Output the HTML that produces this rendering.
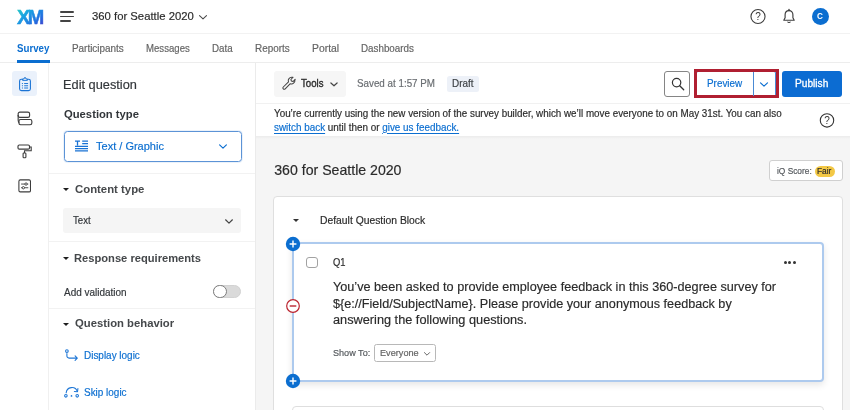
<!DOCTYPE html>
<html><head><meta charset="utf-8">
<style>
*{box-sizing:border-box;margin:0;padding:0}
html,body{width:850px;height:410px;overflow:hidden;background:#fff;font-family:"Liberation Sans",sans-serif;color:#32363a}
.abs{position:absolute}
#root{will-change:transform;position:relative;width:850px;height:410px;overflow:hidden;background:#fff}
.tri{width:0;height:0;border-left:3.4px solid transparent;border-right:3.4px solid transparent;border-top:3.8px solid #1e1e1e}
.t{position:absolute;white-space:nowrap;line-height:1;transform-origin:0 0}
</style></head><body>
<div id="root">
<!-- top header -->
<div class="abs" style="left:0;top:33px;width:850px;height:1px;background:#f2f2f2"></div>
<svg class="abs" style="left:15px;top:6px" width="32" height="22" viewBox="0 0 32 22">
<defs><linearGradient id="g" x1="0" y1="0" x2="1" y2="1"><stop offset="0" stop-color="#2fd4bc"/><stop offset="0.35" stop-color="#1aa3e2"/><stop offset="0.7" stop-color="#226fe0"/><stop offset="1" stop-color="#4a35c6"/></linearGradient></defs>
<text x="1.9" y="17.9" font-family="Liberation Sans,sans-serif" font-weight="bold" font-size="19.8" letter-spacing="-2.3" fill="url(#g)" stroke="url(#g)" stroke-width="0.5">XM</text>
</svg>
<div class="abs" style="left:60px;top:11.25px;width:14px;height:1.5px;background:#444;border-radius:1px"></div>
<div class="abs" style="left:60px;top:15.75px;width:14px;height:1.5px;background:#444;border-radius:1px"></div>
<div class="abs" style="left:60px;top:20.25px;width:11px;height:1.5px;background:#444;border-radius:1px"></div>
<svg class="abs" style="left:197.8px;top:13.6px" width="10" height="7" viewBox="0 0 10 7"><path d="M1.5 1.6 L5 4.9 L8.5 1.6" fill="none" stroke="#4a4a4a" stroke-width="1.05" stroke-linecap="round" stroke-linejoin="round"/></svg>
<!-- header right icons -->
<svg class="abs" style="left:749px;top:8px" width="18" height="18" viewBox="0 0 18 18"><circle cx="9" cy="8.5" r="7.05" fill="none" stroke="#3c3c3c" stroke-width="1.1"/><text x="9" y="12" text-anchor="middle" font-family="Liberation Sans,sans-serif" font-size="10" fill="#333">?</text></svg>
<svg class="abs" style="left:782px;top:8px" width="15" height="17" viewBox="0 0 15 17"><path d="M7 2.6 C4.5 2.6 3.1 4.5 3.1 6.8 V9.8 L1.8 12.2 H12.2 L10.9 9.8 V6.8 C10.9 4.5 9.5 2.6 7 2.6 Z" fill="none" stroke="#3c3c3c" stroke-width="1.15" stroke-linejoin="round"/><path d="M7 1.4v1.2" stroke="#3c3c3c" stroke-width="1.3" stroke-linecap="round"/><path d="M5.6 13.6 a1.5 1.5 0 0 0 2.8 0" fill="none" stroke="#3c3c3c" stroke-width="1.1"/></svg>
<div class="abs" style="left:811.5px;top:8px;width:17px;height:17px;border-radius:50%;background:#0b6ed0"></div>

<!-- nav tabs -->
<div class="abs" style="left:0;top:62px;width:850px;height:1px;background:#ededed"></div>
<div class="abs" style="left:17.2px;top:60px;width:32.6px;height:2.5px;background:#0b6ed0"></div>

<!-- left rail -->
<div class="abs" style="left:48px;top:63px;width:1px;height:347px;background:#f0f0f0"></div>
<div class="abs" style="left:12px;top:71px;width:25px;height:25px;border-radius:3px;background:#eaf1fb"></div>
<svg class="abs" style="left:17.5px;top:75.6px" width="14" height="16" viewBox="0 0 15 17"><rect x="1.7" y="3.4" width="11.6" height="12.2" rx="2" fill="none" stroke="#1a73d4" stroke-width="1.15"/><path d="M4.9 4.6V3.2h1.3L7.5 1.2 8.8 3.2h1.3v1.4z" fill="#eaf1fb" stroke="#1a73d4" stroke-width="1.05" stroke-linejoin="round"/><path d="M4.2 8h1.1M6.6 8h4.2M4.2 10.4h1.1M6.6 10.4h4.2M4.2 12.8h1.1M6.6 12.8h4.2" stroke="#1a73d4" stroke-width="1.05"/></svg>
<svg class="abs" style="left:16.7px;top:110.7px" width="16" height="15" viewBox="0 0 17 16"><rect x="1.2" y="1.2" width="12.2" height="5.6" rx="1.8" fill="none" stroke="#3c3c3c" stroke-width="1.2"/><rect x="2" y="9" width="13.8" height="5.6" rx="1.8" fill="none" stroke="#3c3c3c" stroke-width="1.2"/><path d="M1.2 4.2v5.6q0 2 1.2 2.6" fill="none" stroke="#3c3c3c" stroke-width="1.2"/></svg>
<svg class="abs" style="left:17.4px;top:144.3px" width="16" height="15" viewBox="0 0 16 17" preserveAspectRatio="none"><rect x="1" y="1.2" width="11.5" height="4.6" rx="1.3" fill="none" stroke="#3c3c3c" stroke-width="1.15"/><path d="M12.5 3.5h1.7v4.2H7.5v2.5" fill="none" stroke="#3c3c3c" stroke-width="1.1"/><rect x="6.1" y="10.2" width="2.8" height="5.4" rx="0.8" fill="none" stroke="#3c3c3c" stroke-width="1.1"/></svg>
<svg class="abs" style="left:17.7px;top:179px" width="13.4" height="13.8" viewBox="0 0 15 15" preserveAspectRatio="none"><rect x="1" y="1" width="13" height="13" rx="1.6" fill="none" stroke="#3c3c3c" stroke-width="1.2"/><path d="M3.5 5.5h8M3.5 9.5h8" stroke="#3c3c3c" stroke-width="1"/><circle cx="9" cy="5.5" r="1.3" fill="#fff" stroke="#3c3c3c" stroke-width="1"/><circle cx="6" cy="9.5" r="1.3" fill="#fff" stroke="#3c3c3c" stroke-width="1"/></svg>

<!-- left panel -->
<div class="abs" style="left:255px;top:63px;width:1px;height:347px;background:#ebebeb"></div>
<div class="abs" style="left:63.5px;top:130.5px;width:178px;height:31px;border:1px solid #5c93d6;border-radius:3.5px;background:#fff;box-shadow:0 0 0 1px rgba(92,147,214,.12)"></div>
<svg class="abs" style="left:73.5px;top:140px" width="15" height="12" viewBox="0 0 15 12"><path d="M1 1.2h5M3.5 1.2v4.3M8.2 1.2h5.8M8.2 3.6h5.8M1 6.4h13M1 8.6h13M1 10.8h13" stroke="#1a73d4" stroke-width="1.3" fill="none"/></svg>
<svg class="abs" style="left:218.2px;top:142.6px" width="10" height="7" viewBox="0 0 10 7"><path d="M1.6 1.8 L5 5.1 L8.4 1.8" fill="none" stroke="#0b6ed0" stroke-width="1.15" stroke-linecap="round" stroke-linejoin="round"/></svg>
<div class="abs" style="left:49px;top:173px;width:206px;height:1px;background:#f2f2f2"></div>
<div class="abs tri" style="left:63.1px;top:188.2px"></div>
<div class="abs" style="left:63.2px;top:208px;width:178.3px;height:25.2px;border-radius:3px;background:#f5f5f5"></div>
<svg class="abs" style="left:224.2px;top:217.6px" width="10" height="7" viewBox="0 0 10 7"><path d="M1.6 1.8 L5 5.1 L8.4 1.8" fill="none" stroke="#444" stroke-width="1.2" stroke-linecap="round" stroke-linejoin="round"/></svg>
<div class="abs" style="left:49px;top:241px;width:206px;height:1px;background:#f2f2f2"></div>
<div class="abs tri" style="left:63.1px;top:256.8px"></div>
<div class="abs" style="left:212.5px;top:285.3px;width:28.5px;height:13.2px;border-radius:7px;background:#dadada;border:1px solid #d2d2d2"></div>
<div class="abs" style="left:212.5px;top:285.3px;width:14.5px;height:13.2px;border-radius:7px;background:#fff;border:1px solid #7d7d7d"></div>
<div class="abs" style="left:49px;top:308px;width:206px;height:1px;background:#f2f2f2"></div>
<div class="abs tri" style="left:63.1px;top:322.8px"></div>
<svg class="abs" style="left:63.5px;top:348px" width="15" height="14" viewBox="0 0 15 14"><circle cx="2.9" cy="3.1" r="1.35" fill="none" stroke="#1f77d6" stroke-width="1.05"/><path d="M2.9 5.5V8a2.1 2.1 0 0 0 2.1 2.1H13.2M11.1 7.9l2.2 2.2-2.2 2.2" fill="none" stroke="#1f77d6" stroke-width="1.1" stroke-linecap="round" stroke-linejoin="round"/></svg>
<svg class="abs" style="left:63.5px;top:385.5px" width="16" height="14" viewBox="0 0 16 14"><path d="M2.2 6.8A5.7 5.7 0 0 1 13.3 5.5" fill="none" stroke="#1f77d6" stroke-width="1.1" stroke-linecap="round"/><path d="M13.9 2.5L13.5 5.8 10.4 5.5" fill="none" stroke="#1f77d6" stroke-width="1.1" stroke-linecap="round" stroke-linejoin="round"/><circle cx="1.9" cy="9.8" r="1.3" fill="none" stroke="#1f77d6" stroke-width="1.05"/><circle cx="7.5" cy="9.9" r="0.85" fill="#1f77d6"/><circle cx="13.2" cy="9.8" r="1.3" fill="none" stroke="#1f77d6" stroke-width="1.05"/></svg>

<!-- main area -->
<div class="abs" style="left:256px;top:135.5px;width:594px;height:275px;background:#f5f5f5"></div>
<div class="abs" style="left:256px;top:135.5px;width:594px;height:3px;background:linear-gradient(rgba(0,0,0,.04),rgba(0,0,0,0))"></div>
<div class="abs" style="left:256px;top:103px;width:594px;height:1px;background:#f1f1f1"></div>
<!-- toolbar -->
<div class="abs" style="left:273.5px;top:71px;width:72px;height:26px;border-radius:3px;background:#f6f6f6"></div>
<svg class="abs" style="left:280.6px;top:76.2px" width="16" height="16" viewBox="0 0 16 16"><path d="M13.9 4.1a3.4 3.4 0 0 1-4.6 3.6L4.2 12.9a1.3 1.3 0 0 1-1.9-1.9l5.2-5.1a3.4 3.4 0 0 1 3.6-4.6l1-.1-2.2 2.3.5 1.6 1.6.5 2.2-2.3z" fill="none" stroke="#444" stroke-width="1.05" stroke-linejoin="round"/></svg>
<svg class="abs" style="left:328.8px;top:81px" width="10" height="7" viewBox="0 0 10 7"><path d="M1.9 2 L5 4.8 L8.1 2" fill="none" stroke="#444" stroke-width="1.2" stroke-linecap="round" stroke-linejoin="round"/></svg>
<div class="abs" style="left:447px;top:75.8px;width:31.8px;height:16.2px;border-radius:2.5px;background:#edf1f8"></div>
<div class="abs" style="left:664px;top:71px;width:26px;height:25.5px;border:1px solid #858585;border-radius:3px;background:#fff"></div>
<svg class="abs" style="left:670.5px;top:77.3px" width="14" height="14" viewBox="0 0 14 14"><circle cx="5.6" cy="5.6" r="4.2" fill="none" stroke="#333" stroke-width="1.2"/><path d="M8.7 8.7l4 4" stroke="#333" stroke-width="1.3" stroke-linecap="round"/></svg>
<div class="abs" style="left:696px;top:71px;width:80px;height:25.5px;border:1px solid #4a8ad4;border-radius:2px;background:#fff"></div>
<div class="abs" style="left:694px;top:69px;width:85px;height:28.5px;border:3px solid #b01f31"></div>
<div class="abs" style="left:753px;top:71.5px;width:1px;height:24px;background:#4a8ad4"></div>
<svg class="abs" style="left:758.5px;top:80.8px" width="10" height="7" viewBox="0 0 10 7"><path d="M1.5 1.8 L5 5.1 L8.5 1.8" fill="none" stroke="#0b6ed0" stroke-width="1.15" stroke-linecap="round" stroke-linejoin="round"/></svg>
<div class="abs" style="left:781.5px;top:71px;width:60.5px;height:25.5px;border-radius:3px;background:#0c6cd2"></div>
<!-- banner -->
<svg class="abs" style="left:817.5px;top:112px" width="18" height="18" viewBox="0 0 18 18"><circle cx="9" cy="8.4" r="6.7" fill="none" stroke="#333" stroke-width="1.1"/><text x="9" y="11.8" text-anchor="middle" font-family="Liberation Sans,sans-serif" font-size="10" fill="#333">?</text></svg>
<!-- title -->
<div class="abs" style="left:769px;top:159.5px;width:73.5px;height:21px;border:1px solid #d0d0d0;border-radius:3px;background:#fff"></div>
<div class="abs" style="left:815px;top:165.5px;width:19.5px;height:11px;border-radius:5.5px;background:#f3c845"></div>
<!-- block -->
<div class="abs" style="left:273px;top:196px;width:570px;height:230px;background:#fff;border:1px solid #dfdfdf;border-radius:4px"></div>
<div class="abs" style="left:292px;top:406px;width:532px;height:20px;background:#fff;border:1px solid #dedede;border-radius:4px"></div>
<div class="abs tri" style="left:292.6px;top:218.9px;border-top-color:#333"></div>
<!-- question card -->
<div class="abs" style="left:292px;top:242px;width:532px;height:140px;background:#fff;border:2px solid #adcaee;border-radius:4px;box-shadow:0 3px 7px rgba(0,0,0,.10)"></div>
<svg class="abs" style="left:285.3px;top:236px" width="16" height="16" viewBox="0 0 16 16"><circle cx="8" cy="8" r="7.2" fill="#0b6ed0"/><path d="M4.6 8h6.8M8 4.6v6.8" stroke="#fff" stroke-width="1.4"/></svg>
<svg class="abs" style="left:285.2px;top:372.5px" width="16" height="16" viewBox="0 0 16 16"><circle cx="8" cy="8" r="7.2" fill="#0b6ed0"/><path d="M4.6 8h6.8M8 4.6v6.8" stroke="#fff" stroke-width="1.4"/></svg>
<svg class="abs" style="left:285.3px;top:297.5px" width="16" height="16" viewBox="0 0 16 16"><circle cx="8" cy="8" r="6.3" fill="#fff" stroke="#bb2530" stroke-width="1.2"/><path d="M4.7 8h6.6" stroke="#bb2530" stroke-width="1.4"/></svg>
<div class="abs" style="left:305.8px;top:256.7px;width:11.8px;height:11.6px;border:1px solid #a2a2a2;border-radius:3px;background:#fff"></div>
<div class="abs" style="left:783.7px;top:260.7px;width:3.1px;height:3.1px;border-radius:50%;background:#333"></div>
<div class="abs" style="left:788.1px;top:260.7px;width:3.1px;height:3.1px;border-radius:50%;background:#333"></div>
<div class="abs" style="left:792.5px;top:260.7px;width:3.1px;height:3.1px;border-radius:50%;background:#333"></div>
<div class="abs" style="left:374px;top:344.3px;width:61.5px;height:17.7px;border:1px solid #b8b8b8;border-radius:2.5px;background:#fff"></div>
<svg class="abs" style="left:422.5px;top:350.5px" width="8" height="6" viewBox="0 0 8 6"><path d="M1.4 1.6 L4 4.2 L6.6 1.6" fill="none" stroke="#666" stroke-width="1" stroke-linecap="round" stroke-linejoin="round"/></svg>
<div class="t" style="left:91.51px;top:10.58px;font-size:11.44px;font-weight:normal;color:#2b2b2b;transform:scaleX(0.9882);-webkit-text-stroke:0.18px #2b2b2b;">360 for Seattle 2020</div>
<div class="t" style="left:17.27px;top:43.60px;font-size:10.4px;font-weight:bold;color:#0b6ed0;transform:scaleX(0.9343);">Survey</div>
<div class="t" style="left:72.04px;top:43.60px;font-size:10.4px;font-weight:normal;color:#646464;transform:scaleX(0.9531);-webkit-text-stroke:0.18px #646464;">Participants</div>
<div class="t" style="left:145.81px;top:43.60px;font-size:10.4px;font-weight:normal;color:#646464;transform:scaleX(0.9243);-webkit-text-stroke:0.18px #646464;">Messages</div>
<div class="t" style="left:212.29px;top:43.60px;font-size:10.4px;font-weight:normal;color:#646464;transform:scaleX(0.9412);-webkit-text-stroke:0.18px #646464;">Data</div>
<div class="t" style="left:255.49px;top:43.60px;font-size:10.4px;font-weight:normal;color:#646464;transform:scaleX(0.9532);-webkit-text-stroke:0.18px #646464;">Reports</div>
<div class="t" style="left:312.25px;top:43.60px;font-size:10.4px;font-weight:normal;color:#646464;transform:scaleX(0.9981);-webkit-text-stroke:0.18px #646464;">Portal</div>
<div class="t" style="left:360.89px;top:43.60px;font-size:10.4px;font-weight:normal;color:#646464;transform:scaleX(0.9436);-webkit-text-stroke:0.18px #646464;">Dashboards</div>
<div class="t" style="left:62.98px;top:79.06px;font-size:12.48px;font-weight:normal;color:#32363a;transform:scaleX(1.0249);-webkit-text-stroke:0.18px #32363a;">Edit question</div>
<div class="t" style="left:63.51px;top:108.58px;font-size:11.44px;font-weight:bold;color:#32363a;transform:scaleX(0.9834);">Question type</div>
<div class="t" style="left:95.77px;top:139.93px;font-size:11.75px;font-weight:normal;color:#0b6ed0;transform:scaleX(0.9375);-webkit-text-stroke:0.18px #0b6ed0;">Text / Graphic</div>
<div class="t" style="left:74.50px;top:183.58px;font-size:11.44px;font-weight:bold;color:#45484b;transform:scaleX(0.9928);">Content type</div>
<div class="t" style="left:72.96px;top:215.76px;font-size:10.09px;font-weight:normal;color:#32363a;transform:scaleX(0.9589);-webkit-text-stroke:0.18px #32363a;">Text</div>
<div class="t" style="left:74.27px;top:252.58px;font-size:11.44px;font-weight:bold;color:#45484b;transform:scaleX(0.9748);">Response requirements</div>
<div class="t" style="left:63.50px;top:287.60px;font-size:10.4px;font-weight:normal;color:#32363a;transform:scaleX(0.9575);-webkit-text-stroke:0.18px #32363a;">Add validation</div>
<div class="t" style="left:74.51px;top:317.58px;font-size:11.44px;font-weight:bold;color:#45484b;transform:scaleX(0.9875);">Question behavior</div>
<div class="t" style="left:83.68px;top:350.60px;font-size:10.4px;font-weight:normal;color:#0b6ed0;transform:scaleX(0.9572);-webkit-text-stroke:0.18px #0b6ed0;">Display logic</div>
<div class="t" style="left:83.92px;top:387.60px;font-size:10.4px;font-weight:normal;color:#0b6ed0;transform:scaleX(0.9577);-webkit-text-stroke:0.18px #0b6ed0;">Skip logic</div>
<div class="t" style="left:301.27px;top:78.60px;font-size:10.4px;font-weight:normal;color:#2b2b2b;transform:scaleX(0.9263);-webkit-text-stroke:0.35px #2b2b2b;">Tools</div>
<div class="t" style="left:356.78px;top:78.60px;font-size:10.4px;font-weight:normal;color:#696d71;transform:scaleX(0.9446);-webkit-text-stroke:0.18px #696d71;">Saved at 1:57 PM</div>
<div class="t" style="left:451.78px;top:78.60px;font-size:10.4px;font-weight:normal;color:#3d4145;transform:scaleX(0.9540);-webkit-text-stroke:0.18px #3d4145;">Draft</div>
<div class="t" style="left:706.79px;top:78.60px;font-size:10.4px;font-weight:normal;color:#0b6ed0;transform:scaleX(0.9517);-webkit-text-stroke:0.18px #0b6ed0;">Preview</div>
<div class="t" style="left:795.27px;top:78.60px;font-size:10.4px;font-weight:normal;color:#fff;transform:scaleX(0.9771);-webkit-text-stroke:0.3px #fff;">Publish</div>
<div class="t" style="left:273.76px;top:108.60px;font-size:10.4px;font-weight:normal;color:#2b2b2b;transform:scaleX(0.9468);-webkit-text-stroke:0.18px #2b2b2b;">You’re currently using the new version of the survey builder, which we’ll move everyone to on May 31st. You can also</div>
<div class="t" style="left:273.76px;top:122.60px;font-size:10.4px;font-weight:normal;color:#2b2b2b;transform:scaleX(0.9509);-webkit-text-stroke:0.18px #2b2b2b;"><span style="color:#0b6ed0;-webkit-text-stroke-color:#0b6ed0;text-decoration:underline;text-underline-offset:2px">switch back</span> until then or <span style="color:#0b6ed0;-webkit-text-stroke-color:#0b6ed0;text-decoration:underline;text-underline-offset:2px">give us feedback.</span></div>
<div class="t" style="left:274.25px;top:163.23px;font-size:14.14px;font-weight:normal;color:#2b2b2b;transform:scaleX(1.0000);-webkit-text-stroke:0.18px #2b2b2b;">360 for Seattle 2020</div>
<div class="t" style="left:776.51px;top:167.04px;font-size:8.53px;font-weight:normal;color:#55595d;transform:scaleX(0.9781);-webkit-text-stroke:0.18px #55595d;">iQ Score:</div>
<div class="t" style="left:817.26px;top:167.04px;font-size:8.53px;font-weight:normal;color:#2b2b2b;transform:scaleX(0.9818);-webkit-text-stroke:0.18px #2b2b2b;">Fair</div>
<div class="t" style="left:319.75px;top:215.60px;font-size:10.4px;font-weight:normal;color:#2b2b2b;transform:scaleX(0.9952);-webkit-text-stroke:0.18px #2b2b2b;">Default Question Block</div>
<div class="t" style="left:333.05px;top:257.60px;font-size:10.4px;font-weight:normal;color:#2b2b2b;transform:scaleX(0.9020);-webkit-text-stroke:0.18px #2b2b2b;">Q1</div>
<div class="t" style="left:333.03px;top:280.04px;font-size:13.52px;font-weight:normal;color:#2b2b2b;transform:scaleX(0.9370);-webkit-text-stroke:0.18px #2b2b2b;">You’ve been asked to provide employee feedback in this 360-degree survey for</div>
<div class="t" style="left:333.27px;top:297.04px;font-size:13.52px;font-weight:normal;color:#2b2b2b;transform:scaleX(0.9343);-webkit-text-stroke:0.18px #2b2b2b;">${e://Field/SubjectName}. Please provide your anonymous feedback by</div>
<div class="t" style="left:333.03px;top:313.04px;font-size:13.52px;font-weight:normal;color:#2b2b2b;transform:scaleX(0.9425);-webkit-text-stroke:0.18px #2b2b2b;">answering the following questions.</div>
<div class="t" style="left:333.01px;top:348.62px;font-size:9.36px;font-weight:normal;color:#55595d;transform:scaleX(0.9730);-webkit-text-stroke:0.18px #55595d;">Show To:</div>
<div class="t" style="left:379.76px;top:348.62px;font-size:9.36px;font-weight:normal;color:#646464;transform:scaleX(0.9804);-webkit-text-stroke:0.18px #646464;">Everyone</div>
<div class="t" style="left:817.05px;top:12.14px;font-size:8.32px;font-weight:bold;color:#fff;transform:scaleX(0.9818);">C</div>
</div>
</body></html>
